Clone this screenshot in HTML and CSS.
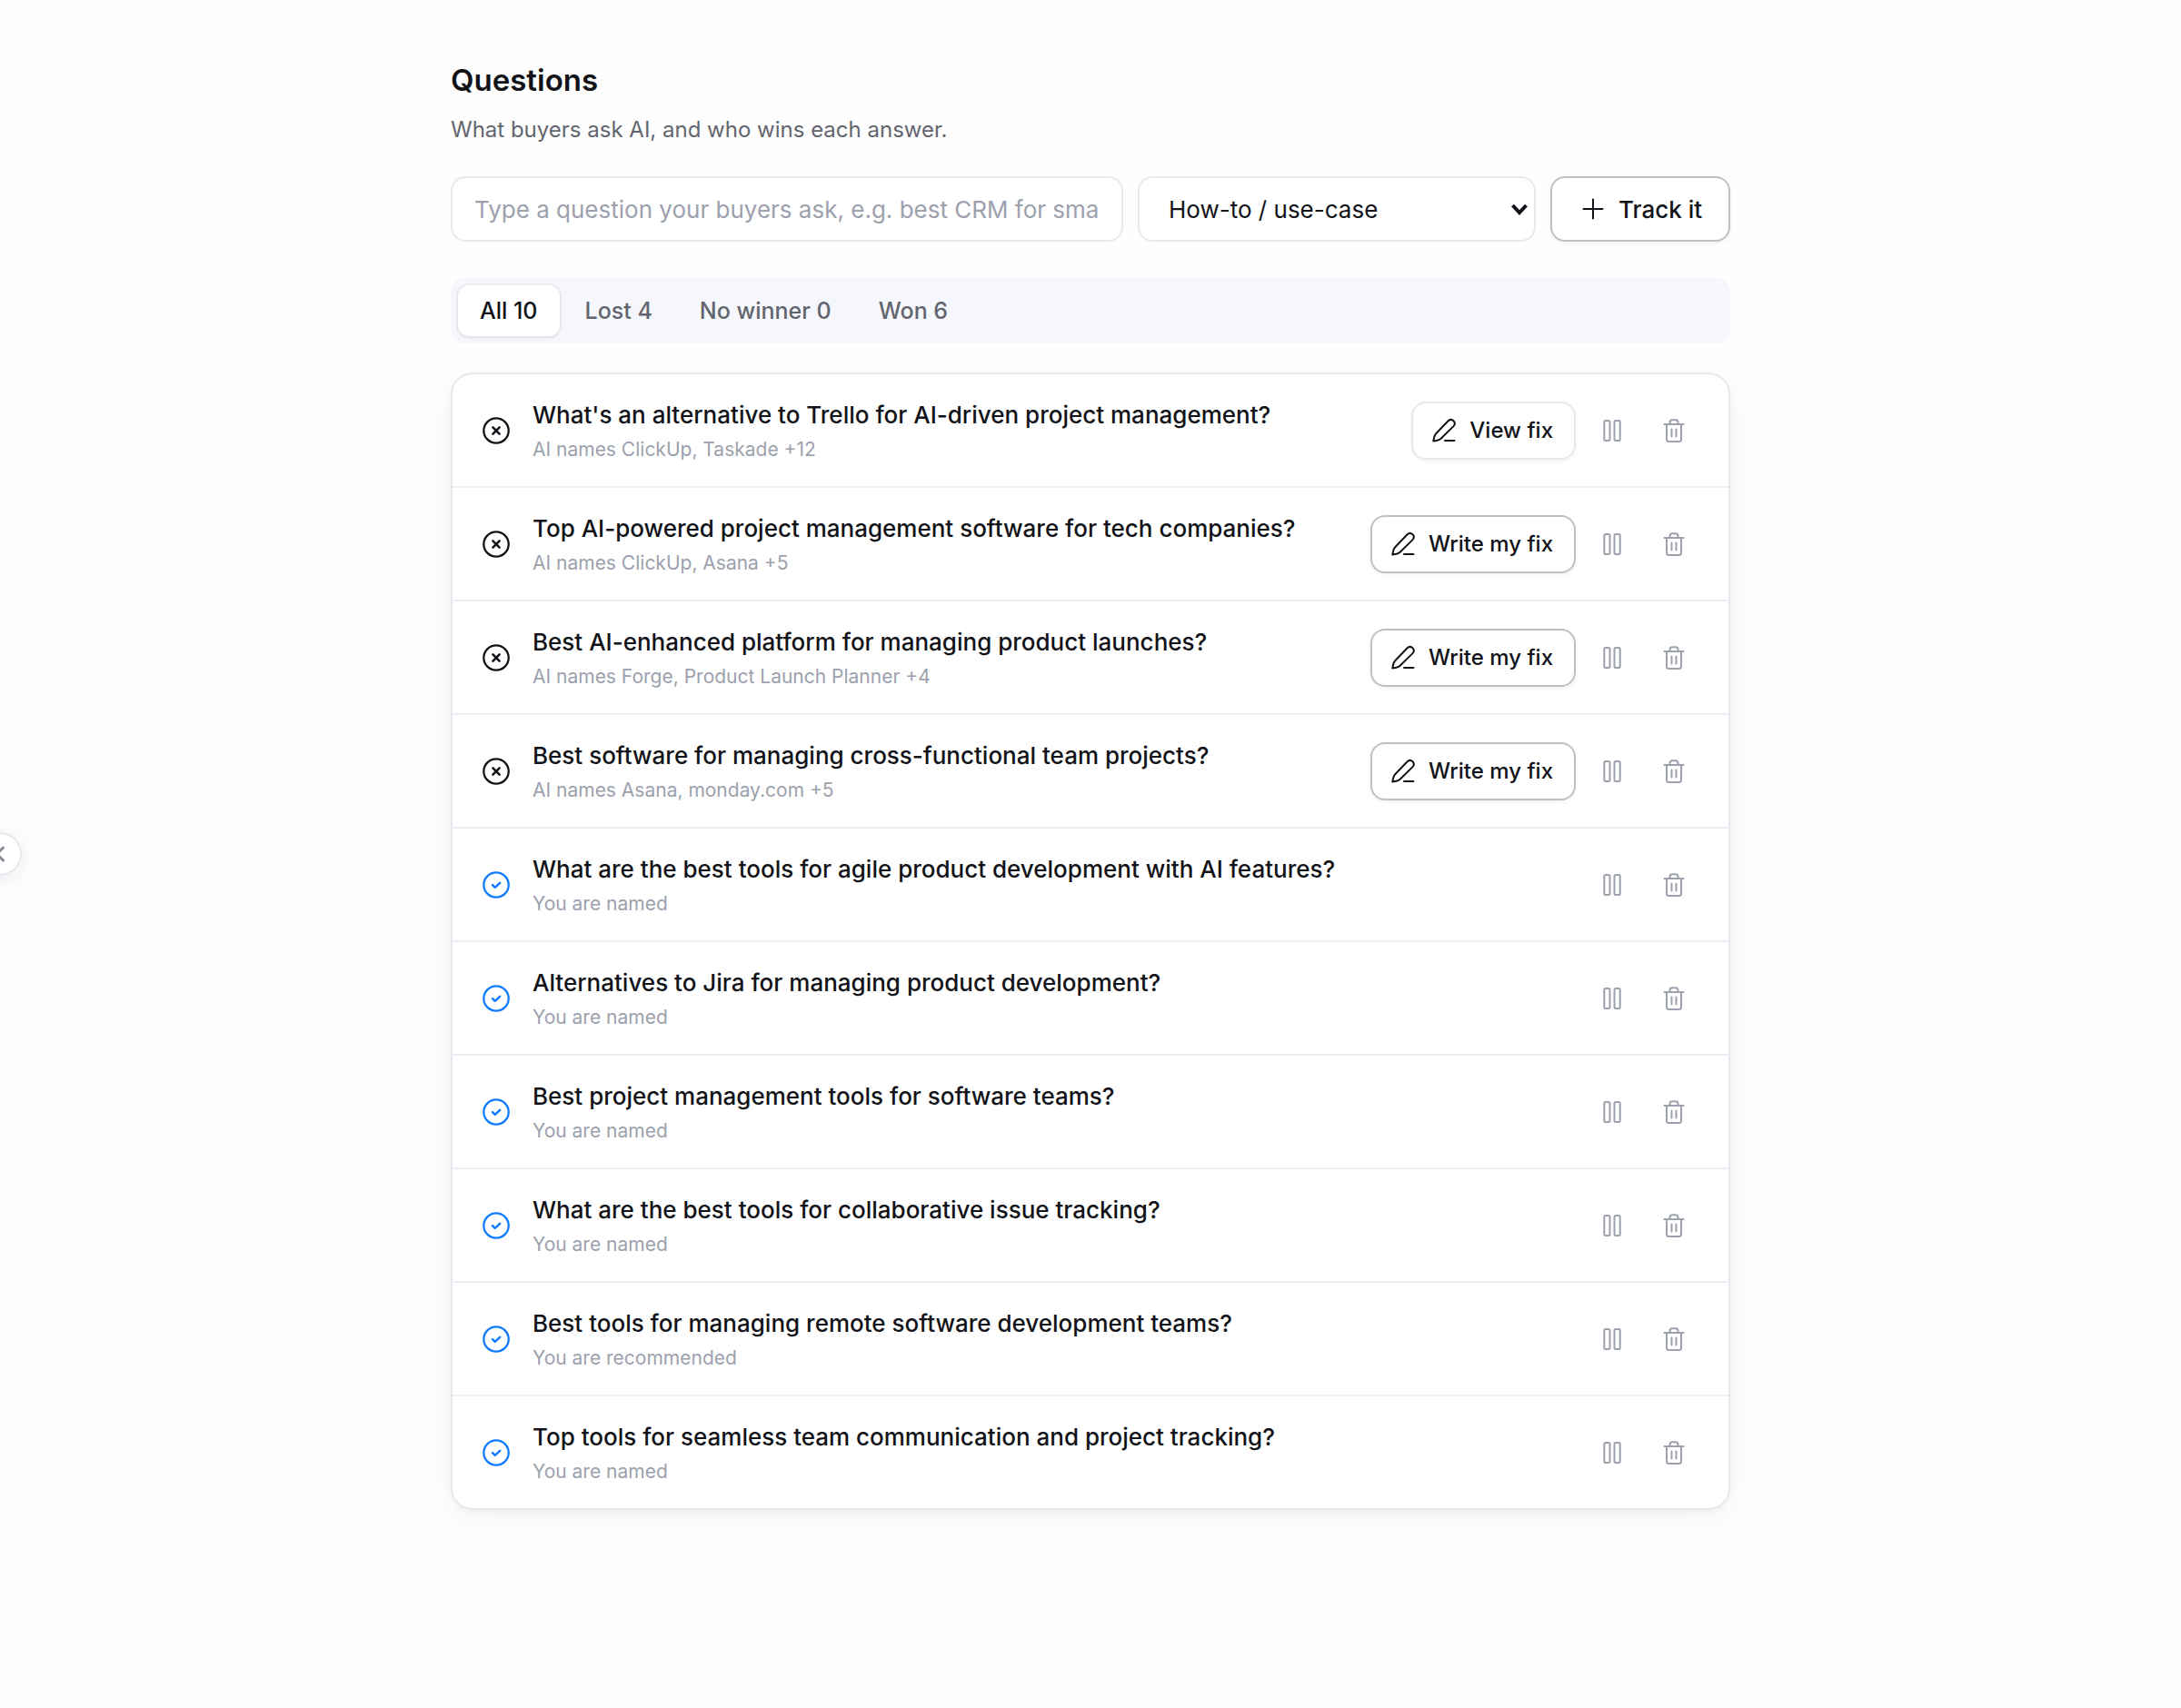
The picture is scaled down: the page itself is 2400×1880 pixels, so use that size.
FILE: index.html
```html
<!DOCTYPE html>
<html lang="en">
<head>
<meta charset="utf-8">
<meta name="viewport" content="width=device-width, initial-scale=1">
<title>Questions</title>
<link rel="stylesheet" href="styles.css">
</head>
<body>
<svg class="sprite" aria-hidden="true">
  <symbol id="lost" viewBox="0 0 32 32"><circle cx="16" cy="16" r="13.7" stroke-width="2.3"/><path d="M12.4 12.4l7.2 7.2M19.6 12.4l-7.2 7.2" stroke-width="2.6"/></symbol>
  <symbol id="won" viewBox="0 0 32 32"><circle cx="16" cy="16" r="13.7" stroke-width="2.3"/><path d="M12 16.2l2.7 2.6 5.4-5" stroke-width="2.5"/></symbol>
  <symbol id="pen" viewBox="0 0 28 28"><path d="M18.6 3.3C20.3 1.7 22.7 1.6 24.5 3.3c1.7 1.8 1.6 4.1 0 5.8L10.6 22.7c-1.2 1.2-2.5 1.6-4.1 2L2.3 25.5l.9-4.2c.4-1.7.8-2.9 2-4.1zM15 25h10.5"/></symbol>
  <symbol id="pause" viewBox="0 0 28 28"><rect x="5.3" y="3" width="6.2" height="22" rx="1.5"/><rect x="16.5" y="3" width="6.2" height="22" rx="1.5"/></symbol>
  <symbol id="trash" viewBox="0 0 28 28"><path d="M3.5 7h21M6 7v16.5Q6 26 8.500 26h11Q22 26 22 23.500V7M9.500 7V5Q9.500 2.200 12.300 2.200h3.400Q18.500 2.200 18.500 5V7M11.500 12.500v8M16.500 12.500v8"/></symbol>
</svg>

<button class="handle" type="button" aria-label="Collapse sidebar"><svg viewBox="0 0 28 28"><path d="M17.500 7l-7 7 7 7"/></svg></button>

<main class="page">
  <h1 class="title">Questions</h1>
  <p class="lead">What buyers ask AI, and who wins each answer.</p>

  <form class="track">
    <input class="field" type="text" aria-label="Question" placeholder="Type a question your buyers ask, e.g. best CRM for small teams">
    <div class="picker">
      <select class="field select" aria-label="Question type"><option>How-to / use-case</option></select>
      <svg class="chevron" viewBox="0 0 20 16" aria-hidden="true"><path d="M2.500 4l7.500 8 7.500-8"/></svg>
    </div>
    <button class="btn btn-track" type="button"><svg viewBox="0 0 32 32"><path d="M16 5.500v21M5.500 16h21"/></svg>Track it</button>
  </form>

  <div class="tabs" role="tablist">
    <button class="tab active" type="button" role="tab" aria-selected="true">All 10</button>
    <button class="tab" type="button" role="tab">Lost 4</button>
    <button class="tab" type="button" role="tab">No winner 0</button>
    <button class="tab" type="button" role="tab">Won 6</button>
  </div>

  <ul class="list">
    <li class="row">
      <svg class="status"><use href="#lost"/></svg>
      <div class="text"><p class="question">What's an alternative to Trello for AI-driven project management?</p><p class="meta">AI names ClickUp, Taskade +12</p></div>
      <button class="btn btn-fix quiet" type="button"><svg><use href="#pen"/></svg>View fix</button>
      <button class="icon-btn" type="button" aria-label="Pause"><svg><use href="#pause"/></svg></button>
      <button class="icon-btn" type="button" aria-label="Delete"><svg><use href="#trash"/></svg></button>
    </li>
    <li class="row">
      <svg class="status"><use href="#lost"/></svg>
      <div class="text"><p class="question">Top AI-powered project management software for tech companies?</p><p class="meta">AI names ClickUp, Asana +5</p></div>
      <button class="btn btn-fix" type="button"><svg><use href="#pen"/></svg>Write my fix</button>
      <button class="icon-btn" type="button" aria-label="Pause"><svg><use href="#pause"/></svg></button>
      <button class="icon-btn" type="button" aria-label="Delete"><svg><use href="#trash"/></svg></button>
    </li>
    <li class="row">
      <svg class="status"><use href="#lost"/></svg>
      <div class="text"><p class="question">Best AI-enhanced platform for managing product launches?</p><p class="meta">AI names Forge, Product Launch Planner +4</p></div>
      <button class="btn btn-fix" type="button"><svg><use href="#pen"/></svg>Write my fix</button>
      <button class="icon-btn" type="button" aria-label="Pause"><svg><use href="#pause"/></svg></button>
      <button class="icon-btn" type="button" aria-label="Delete"><svg><use href="#trash"/></svg></button>
    </li>
    <li class="row">
      <svg class="status"><use href="#lost"/></svg>
      <div class="text"><p class="question">Best software for managing cross-functional team projects?</p><p class="meta">AI names Asana, monday.com +5</p></div>
      <button class="btn btn-fix" type="button"><svg><use href="#pen"/></svg>Write my fix</button>
      <button class="icon-btn" type="button" aria-label="Pause"><svg><use href="#pause"/></svg></button>
      <button class="icon-btn" type="button" aria-label="Delete"><svg><use href="#trash"/></svg></button>
    </li>
    <li class="row">
      <svg class="status won"><use href="#won"/></svg>
      <div class="text"><p class="question">What are the best tools for agile product development with AI features?</p><p class="meta">You are named</p></div>
      <button class="icon-btn" type="button" aria-label="Pause"><svg><use href="#pause"/></svg></button>
      <button class="icon-btn" type="button" aria-label="Delete"><svg><use href="#trash"/></svg></button>
    </li>
    <li class="row">
      <svg class="status won"><use href="#won"/></svg>
      <div class="text"><p class="question">Alternatives to Jira for managing product development?</p><p class="meta">You are named</p></div>
      <button class="icon-btn" type="button" aria-label="Pause"><svg><use href="#pause"/></svg></button>
      <button class="icon-btn" type="button" aria-label="Delete"><svg><use href="#trash"/></svg></button>
    </li>
    <li class="row">
      <svg class="status won"><use href="#won"/></svg>
      <div class="text"><p class="question">Best project management tools for software teams?</p><p class="meta">You are named</p></div>
      <button class="icon-btn" type="button" aria-label="Pause"><svg><use href="#pause"/></svg></button>
      <button class="icon-btn" type="button" aria-label="Delete"><svg><use href="#trash"/></svg></button>
    </li>
    <li class="row">
      <svg class="status won"><use href="#won"/></svg>
      <div class="text"><p class="question">What are the best tools for collaborative issue tracking?</p><p class="meta">You are named</p></div>
      <button class="icon-btn" type="button" aria-label="Pause"><svg><use href="#pause"/></svg></button>
      <button class="icon-btn" type="button" aria-label="Delete"><svg><use href="#trash"/></svg></button>
    </li>
    <li class="row">
      <svg class="status won"><use href="#won"/></svg>
      <div class="text"><p class="question">Best tools for managing remote software development teams?</p><p class="meta">You are recommended</p></div>
      <button class="icon-btn" type="button" aria-label="Pause"><svg><use href="#pause"/></svg></button>
      <button class="icon-btn" type="button" aria-label="Delete"><svg><use href="#trash"/></svg></button>
    </li>
    <li class="row">
      <svg class="status won"><use href="#won"/></svg>
      <div class="text"><p class="question">Top tools for seamless team communication and project tracking?</p><p class="meta">You are named</p></div>
      <button class="icon-btn" type="button" aria-label="Pause"><svg><use href="#pause"/></svg></button>
      <button class="icon-btn" type="button" aria-label="Delete"><svg><use href="#trash"/></svg></button>
    </li>
  </ul>
</main>
</body>
</html>
```
FILE: styles.css
```css
:root {
  --ink: #111318;
  --muted: #62656e;
  --faint: #9ca1ad;
  --line: #e6e9ef;
  --line-strong: #bfc0c7;
  --blue: #0f7bff;
}

* { box-sizing: border-box; }

body {
  margin: 0;
  background: #fefefe;
  color: var(--ink);
  font-family: Inter, "Liberation Sans", sans-serif;
}

h1, p, ul { margin: 0; padding: 0; }

button, input, select { font: inherit; color: inherit; }

button { cursor: pointer; }

svg {
  fill: none;
  stroke: currentColor;
  stroke-width: 2;
  stroke-linecap: round;
  stroke-linejoin: round;
  flex: none;
}

.sprite { position: absolute; width: 0; height: 0; }

.page {
  max-width: 1472px;
  margin: 0 auto;
  padding: 64px 32px;
}

.title { font-size: 33px; font-weight: 600; line-height: 48px; }

.lead { margin-top: 12px; font-size: 24px; line-height: 38px; color: var(--muted); }

/* Add-question form */
.track {
  display: grid;
  grid-template-columns: minmax(0, 1fr) 438px 198px;
  gap: 16px;
  margin-top: 32px;
}

.field {
  width: 100%;
  height: 72px;
  padding: 0 24px;
  border: 2px solid var(--line);
  border-radius: 16px;
  background: #fff;
  font-size: 26px;
}

.field::placeholder { color: var(--faint); opacity: 1; }

.picker { position: relative; }

.select { appearance: none; padding: 0 32px; }

.chevron {
  position: absolute;
  right: 8px;
  top: 28px;
  width: 20px;
  height: 16px;
  stroke-width: 4;
  stroke-linecap: butt;
  stroke-linejoin: miter;
  pointer-events: none;
}

.btn {
  display: flex;
  align-items: center;
  justify-content: center;
  border: 2px solid var(--line-strong);
  border-radius: 16px;
  background: #fff;
  box-shadow: 0 2px 4px rgba(20, 24, 60, .05);
  font-weight: 500;
  white-space: nowrap;
}

.btn-track { gap: 12px; height: 72px; padding: 0; font-size: 26px; }
.btn-track svg { width: 32px; height: 32px; }

.btn-fix { gap: 14px; height: 64px; padding: 0 23px 0 20px; font-size: 24px; }
.btn-fix svg { width: 28px; height: 28px; }
.btn-fix.quiet { border-color: var(--line); }

/* Filter tabs */
.tabs {
  display: flex;
  gap: 4px;
  margin-top: 40px;
  padding: 8px;
  border-radius: 16px;
  background: #f6f7fc;
}

.tab {
  height: 56px;
  padding: 0 24px;
  border: 0;
  border-radius: 12px;
  background: none;
  color: var(--muted);
  font-size: 25px;
  font-weight: 500;
}

.tab.active {
  background: #fff;
  color: var(--ink);
  box-shadow: 0 0 0 2px rgba(20, 24, 60, .04), 0 2px 4px rgba(20, 24, 60, .08);
}

/* Question list */
.list {
  margin-top: 32px;
  border: 2px solid var(--line);
  border-radius: 24px;
  background: #fff;
  box-shadow: 0 2px 4px rgba(20, 24, 60, .03), 0 8px 32px rgba(20, 24, 60, .05);
  list-style: none;
}

.row {
  display: flex;
  align-items: center;
  gap: 12px;
  padding: 22px 32px;
  border-bottom: 2px solid #eeeff4;
}

.row:last-child { border-bottom: 0; }

.status { width: 32px; height: 32px; margin-right: 12px; }
.status.won { color: var(--blue); }

.text { flex: 1; min-width: 0; padding-top: 3px; }

.question { font-size: 26px; font-weight: 500; line-height: 40px; }

.meta { font-size: 21px; line-height: 36px; color: var(--faint); }

.icon-btn {
  display: grid;
  place-items: center;
  width: 56px;
  height: 56px;
  padding: 0;
  border: 0;
  background: none;
  color: var(--faint);
}

.icon-btn svg { width: 28px; height: 28px; }

/* Sidebar handle on the window's left edge */
.handle {
  position: fixed;
  left: -24px;
  top: 50%;
  display: grid;
  place-items: center;
  width: 48px;
  height: 48px;
  margin-top: -24px;
  padding: 0;
  border: 2px solid var(--line);
  border-radius: 50%;
  background: #fff;
  box-shadow: 0 4px 24px rgba(20, 24, 60, .08);
  color: #858a97;
}

.handle svg { width: 28px; height: 28px; stroke-width: 3; transform: none; }
```
